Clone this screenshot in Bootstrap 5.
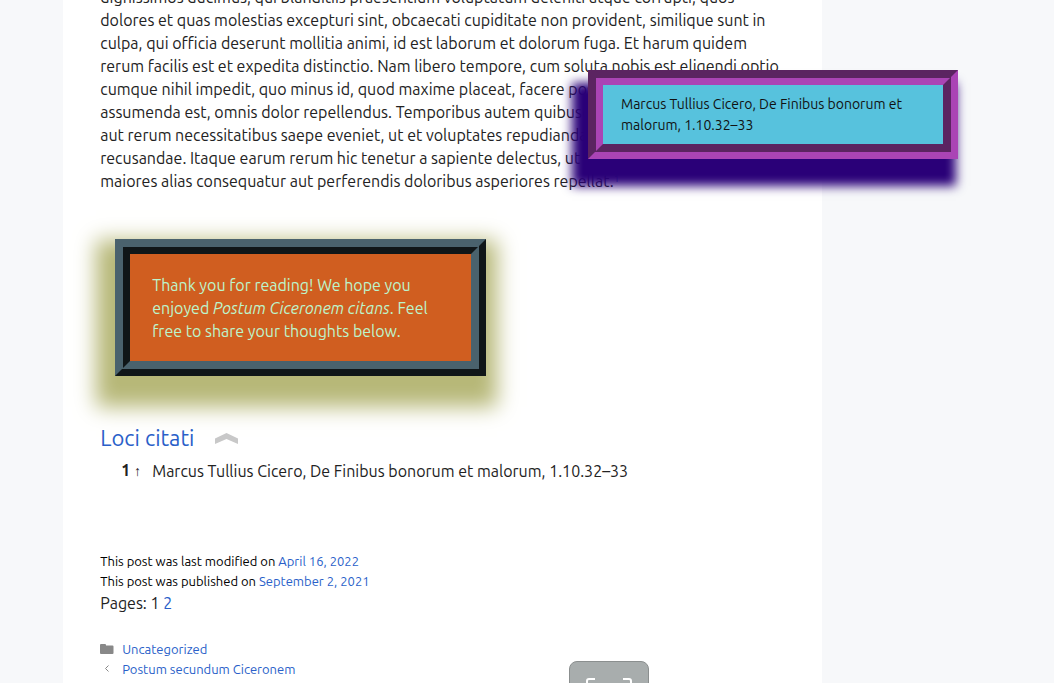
<!DOCTYPE html>
<html lang="la">
<head>
<meta charset="utf-8">
<meta name="viewport" content="width=device-width, initial-scale=1">
<title>Postum Ciceronem citans</title>
<link href="https://cdn.jsdelivr.net/npm/bootstrap@5.3.0/dist/css/bootstrap.min.css" rel="stylesheet">
<style>
body { background: #f7f8fa; color: #222; font-family: Ubuntu, Roboto, "Noto Sans", sans-serif; font-size: 16px; line-height: 23px; height: 100vh; overflow: hidden; }
a { color: #2a5fc9; text-decoration: none; }
.post { width: 72%; margin-left: 6%; padding: 0 37px; background: #fff; min-height: 100vh; }
.excerpt { margin: -14px -9px 46px 0; }
.excerpt sup { font-size: 10px; }
.closing { width: 371px; margin-left: 15px; padding: 20px 22px 18px; color: #bcf5cc; background: #d05e20; border: 15px ridge #4a626d; box-shadow: -4px 16px 20px 15px #b7b878; }
.locus-tip { top: 70px; left: 588px; width: 370px; padding: 9px 18px 8px; color: #111; background: #57c2dd; border: 15px groove #aa44b5; box-shadow: -9px 20px 10px 7px #2a0078; font-size: 14px; line-height: 21px; }
.loci-title { margin: 48px 0 7px; font-size: 22px; line-height: 28px; font-weight: 400; }
.notes td { padding: 0; }
.notes .num { width: 52px; padding-left: 21px; }
.meta { margin-top: 68px; color: #000; }
.meta nav { margin-top: 1px; color: #222; }
.fine { font-size: 13px; line-height: 20px; }
.ico { width: 22px; }
.chevron { margin-left: 19px; }
.expand { bottom: -38px; left: 569px; width: 80px; height: 60px; padding: 16px 0 0; background: #a8adad; border: 1px solid #8b8f8f; border-radius: 8px; }
</style>
<script src="https://cdn.jsdelivr.net/npm/bootstrap@5.3.0/dist/js/bootstrap.bundle.min.js"></script>
</head>
<body>
<main class="post">
  <p class="excerpt">dignissimos ducimus, qui blanditiis praesentium voluptatum deleniti atque corrupti, quos<br>
  dolores et quas molestias excepturi sint, obcaecati cupiditate non provident, similique sunt in<br>
  culpa, qui officia deserunt mollitia animi, id est laborum et dolorum fuga. Et harum quidem<br>
  rerum facilis est et expedita distinctio. Nam libero tempore, cum soluta nobis est eligendi optio<br>
  cumque nihil impedit, quo minus id, quod maxime placeat, facere possimus, omnis voluptas<br>
  assumenda est, omnis dolor repellendus. Temporibus autem quibusdam et aut officiis debitis<br>
  aut rerum necessitatibus saepe eveniet, ut et voluptates repudiandae sint et molestiae non<br>
  recusandae. Itaque earum rerum hic tenetur a sapiente delectus, ut aut reiciendis voluptatibus<br>
  maiores alias consequatur aut perferendis doloribus asperiores repellat.<sup><a href="#locus-1">1</a></sup></p>

  <div class="closing">Thank you for reading! We hope you enjoyed <em>Postum Ciceronem citans</em>. Feel free to share your thoughts below.</div>

  <h2 class="loci-title d-flex align-items-center"><a href="#loci">Loci citati</a>
    <svg class="chevron" width="28" height="14" viewBox="0 0 28 14" aria-hidden="true"><path d="M2 7.500 13.500 2 25 7.500V13L13.500 8 2 13Z" fill="#c8c8c8"/></svg></h2>
  <table class="notes w-100"><tr id="locus-1"><td class="num"><b>1</b> <small>↑</small></td><td>Marcus Tullius Cicero, De Finibus bonorum et malorum, 1.10.32–33</td></tr></table>

  <section class="meta">
    <div class="fine">This post was last modified on <a href="#m">April 16, 2022</a></div>
    <div class="fine">This post was published on <a href="#p">September 2, 2021</a></div>
    <nav aria-label="Pages">Pages: <span>1</span> <a href="#2">2</a></nav>
  </section>
  <footer class="fine mt-4">
    <div class="d-flex align-items-center"><span class="ico d-flex"><svg width="14" height="12" viewBox="0 0 14 12"><path d="M0 2Q0 1 1 1H5Q6 1 6 2V2.500H12.500Q13.500 2.500 13.500 3.500V10Q13.500 11 12.500 11H1Q0 11 0 10Z" fill="#888"/></svg></span><a href="#c">Uncategorized</a></div>
    <div class="d-flex align-items-center"><span class="ico d-flex"><svg width="14" height="12" viewBox="0 0 14 12"><path d="M8.500 2.500 5.500 5.500 8.500 8.500" fill="none" stroke="#888"/></svg></span><a href="#b">Postum secundum Ciceronem</a></div>
    <div class="d-flex align-items-center"><span class="ico"></span><a href="#n">Aliud</a></div>
  </footer>
</main>
<aside class="locus-tip position-absolute" role="tooltip">Marcus Tullius Cicero, De Finibus bonorum et malorum, 1.10.32–33</aside>
<button class="expand position-absolute d-flex justify-content-center" aria-label="Expand"><svg width="46" height="30" viewBox="0 0 46 30" fill="none" stroke="#fff" stroke-width="2"><path d="M1 9V3Q1 1 3 1H9M37 1H43Q45 1 45 3V9"/></svg></button>
</body>
</html>
